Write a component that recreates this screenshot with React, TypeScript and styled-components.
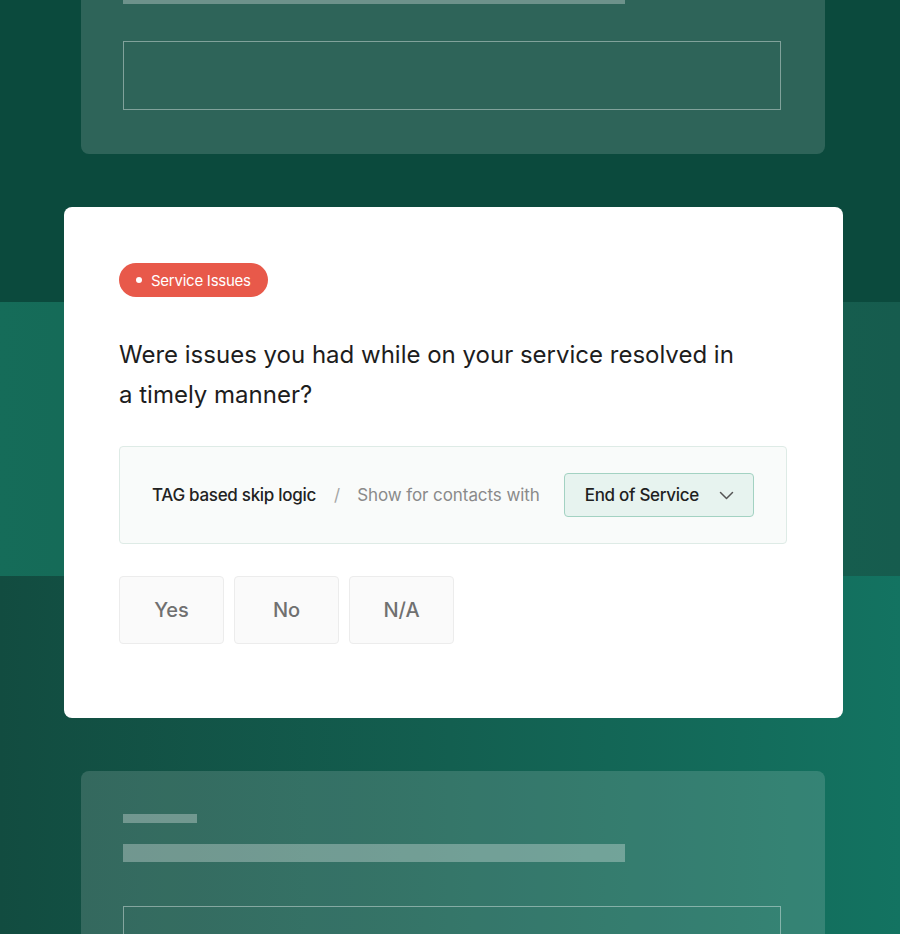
import React from "react";
import styled, { createGlobalStyle } from "styled-components";

const GlobalStyle = createGlobalStyle`
  * {
    box-sizing: border-box;
  }
  body {
    margin: 0;
    font-family: Inter, "Noto Sans", sans-serif;
  }
`;

const answers = ["Yes", "No", "N/A"];

const GhostCard = ({ gap, lift }: { gap: number; lift?: number }) => (
  <Ghost $lift={lift}>
    <ShortBar />
    <LongBar />
    <GhostInput $gap={gap} />
  </Ghost>
);

export default function App() {
  return (
    <>
      <GlobalStyle />
      <Page>
        <GhostCard gap={37} lift={87} />
        <Card>
          <Badge>
            <Dot />
            Service Issues
          </Badge>
          <Question>
            Were issues you had while on your service resolved in
            <br />a timely manner?
          </Question>
          <LogicBox>
            <LogicTitle>TAG based skip logic</LogicTitle>
            <Slash>/</Slash>
            <LogicHint>Show for contacts with</LogicHint>
            <Select>
              End of Service
              <svg width="15" height="9" viewBox="0 0 15 9" fill="none">
                <path
                  d="M1.5 1.5l6 6 6-6"
                  stroke="#555"
                  strokeWidth="1.5"
                  strokeLinecap="round"
                  strokeLinejoin="round"
                />
              </svg>
            </Select>
          </LogicBox>
          <Answers>
            {answers.map((a) => (
              <Answer key={a}>{a}</Answer>
            ))}
          </Answers>
        </Card>
        <GhostCard gap={44} />
      </Page>
    </>
  );
}

const Page = styled.div`
  width: 900px;
  height: 934px;
  overflow: hidden;
  display: flex;
  flex-direction: column;
  gap: 53px;
  padding: 0 57px 0 64px;
  background-color: #0b4a3d;
  background-image: linear-gradient(90deg, #124c40 0%, #135f50 50%, #137361 100%),
    linear-gradient(90deg, #156c59 0%, #15634f 60%, #165c4e 100%);
  background-size: 100% 358px, 100% 274px;
  background-position: 0 576px, 0 302px;
  background-repeat: no-repeat;
`;

const Ghost = styled.div<{ $lift?: number }>`
  flex: none;
  margin: ${({ $lift }) => ($lift ? `-${$lift}px` : "0")} 18px 0 17px;
  padding: 43px 44px 44px 42px;
  border-radius: 8px;
  background: rgba(255, 255, 255, 0.145);
  display: flex;
  flex-direction: column;
  align-items: flex-start;
`;

const ShortBar = styled.div`
  width: 74px;
  height: 9px;
  background: rgba(255, 255, 255, 0.3);
`;

const LongBar = styled.div`
  width: 502px;
  height: 18px;
  margin-top: 21px;
  background: rgba(255, 255, 255, 0.3);
`;

const GhostInput = styled.div<{ $gap: number }>`
  align-self: stretch;
  height: 69px;
  margin-top: ${({ $gap }) => $gap}px;
  border: 1.5px solid rgba(255, 255, 255, 0.4);
`;

const Card = styled.div`
  flex: none;
  height: 511px;
  padding: 56px 56px 0 55px;
  background: #fff;
  border-radius: 8px;
  display: flex;
  flex-direction: column;
  align-items: flex-start;
`;

const Badge = styled.div`
  height: 34px;
  display: flex;
  align-items: center;
  gap: 9px;
  padding: 0 17px 0 17px;
  border-radius: 17px;
  background: #e8594a;
  color: #fff;
  font-size: 15px;
  letter-spacing: -0.25px;
`;

const Dot = styled.span`
  width: 6px;
  height: 6px;
  border-radius: 50%;
  background: #fff;
`;

const Question = styled.h2`
  margin: 38px 0 0;
  font-size: 24px;
  font-weight: 400;
  line-height: 40px;
  letter-spacing: 0;
  color: #1d1d1d;
`;

const LogicBox = styled.div`
  align-self: stretch;
  height: 98px;
  margin-top: 31px;
  padding: 0 0 0 32px;
  display: flex;
  align-items: center;
  white-space: nowrap;
  background: #f9fbfa;
  border: 1px solid #deebe6;
  border-radius: 4px;
  font-size: 17px;

  & > * {
    flex: none;
  }
`;

const LogicTitle = styled.span`
  font-weight: 500;
  color: #222;
  letter-spacing: -0.3px;
`;

const Slash = styled.span`
  margin: 0 17px 0 18px;
  color: #a5a5a5;
`;

const LogicHint = styled.span`
  color: #8a8a8a;
  letter-spacing: -0.08px;
`;

const Select = styled.div`
  margin-left: 24px;
  height: 44px;
  display: flex;
  align-items: center;
  gap: 20px;
  padding: 0 19px 0 20px;
  background: #e7f3ef;
  border: 1px solid #a3d2c2;
  border-radius: 4px;
  font-size: 17px;
  font-weight: 500;
  color: #1f1f1f;
  letter-spacing: -0.3px;
`;

const Answers = styled.div`
  margin-top: 32px;
  display: flex;
  gap: 10px;
`;

const Answer = styled.div`
  width: 105px;
  height: 68px;
  display: flex;
  align-items: center;
  justify-content: center;
  background: #fafafa;
  border: 1px solid #ececec;
  border-radius: 4px;
  font-size: 20px;
  font-weight: 500;
  color: #707070;
`;
